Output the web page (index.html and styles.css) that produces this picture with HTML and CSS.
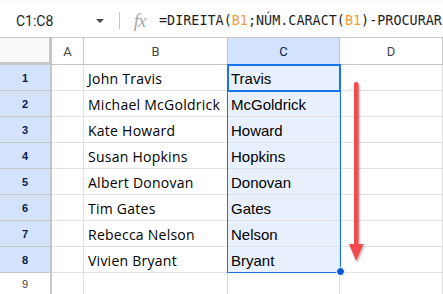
FILE: index.html
```html
<!DOCTYPE html>
<html>
<head>
	<meta charset="utf-8">
	<title>DIREITA</title>
	<link rel="stylesheet" href="styles.css">
</head>
<body>
	<div class="top-strip"></div>
	<div class="formula-bar">
		<div class="name-box">
			<span class="range">C1:C8</span>
			<span class="caret"></span>
		</div>
		<div class="divider"></div>
		<div class="fx">fx</div>
		<div class="formula">=DIREITA(<span class="ref">B1</span>;NÚM.CARACT(<span class="ref">B1</span>)-PROCURAR</div>
	</div>
	<div class="sheet">
		<div class="grid">
			<div class="corner"></div>
			<div class="col-head">A</div>
			<div class="col-head">B</div>
			<div class="col-head active">C</div>
			<div class="col-head">D</div>

			<div class="row-head active">1</div><div class="cell"></div><div class="cell name">John Travis</div><div class="cell last sel">Travis</div><div class="cell"></div>
			<div class="row-head active">2</div><div class="cell"></div><div class="cell name">Michael McGoldrick</div><div class="cell last sel">McGoldrick</div><div class="cell"></div>
			<div class="row-head active">3</div><div class="cell"></div><div class="cell name">Kate Howard</div><div class="cell last sel">Howard</div><div class="cell"></div>
			<div class="row-head active">4</div><div class="cell"></div><div class="cell name">Susan Hopkins</div><div class="cell last sel">Hopkins</div><div class="cell"></div>
			<div class="row-head active">5</div><div class="cell"></div><div class="cell name">Albert Donovan</div><div class="cell last sel">Donovan</div><div class="cell"></div>
			<div class="row-head active">6</div><div class="cell"></div><div class="cell name">Tim Gates</div><div class="cell last sel">Gates</div><div class="cell"></div>
			<div class="row-head active">7</div><div class="cell"></div><div class="cell name">Rebecca Nelson</div><div class="cell last sel">Nelson</div><div class="cell"></div>
			<div class="row-head active">8</div><div class="cell"></div><div class="cell name">Vivien Bryant</div><div class="cell last sel">Bryant</div><div class="cell"></div>
			<div class="row-head">9</div><div class="cell"></div><div class="cell name"></div><div class="cell"></div><div class="cell"></div>
		</div>

		<!-- selection C1:C8 -->
		<div class="range-box"></div>
		<div class="active-cell"></div>
		<div class="fill-handle"></div>

		<svg class="arrow" width="24" height="192" viewBox="0 0 24 192">
			<defs>
				<filter id="shadow" x="-50%" y="-10%" width="200%" height="120%">
					<feDropShadow dx="1" dy="1.5" stdDeviation="1.2" flood-color="#000" flood-opacity="0.35"/>
				</filter>
			</defs>
			<g filter="url(#shadow)" fill="#f04b4f">
				<rect x="8" y="4" width="4.5" height="166" rx="2.2"/>
				<polygon points="3,166 17.5,166 10.2,183"/>
			</g>
		</svg>
	</div>
</body>
</html>
```

FILE: styles.css
```css
*{margin: 0;padding: 0;box-sizing: border-box;}
body {
	width: 443px;
	height: 294px;
	overflow: hidden;
	background: #ffffff;
	font-family: Roboto, "Liberation Sans", Arial, sans-serif;
	color: #1f1f1f;
}
.top-strip {
	height: 4px;
	background: #f9fbfd;
}
.formula-bar {
	height: 34px;
	display: flex;
	align-items: center;
	border-bottom: 1px solid #c7c7c7;
	overflow: hidden;
}
.name-box {
	flex-shrink: 0;
	width: 119px;
	display: flex;
	align-items: center;
	padding-left: 16px;
	padding-right: 15px;
}
.range {
	font-size: 14px;
	flex: 1;
}
.caret {
	width: 0;
	height: 0;
	border-left: 4.5px solid transparent;
	border-right: 4.5px solid transparent;
	border-top: 4.5px solid #444746;
}
.divider {
	flex-shrink: 0;
	width: 1px;
	height: 17px;
	background: #c4c7c5;
}
.fx {
	flex-shrink: 0;
	width: 39px;
	text-align: center;
	font: italic 19px "Liberation Serif", serif;
	color: #a8a8a8;
	letter-spacing: -1px;
}
.formula {
	flex-shrink: 0;
	white-space: nowrap;
	font: 13.4px "DejaVu Sans Mono", "Liberation Mono", monospace;
	letter-spacing: 0.02px;
	color: #1f1f1f;
}
.ref {
	color: #f09a3e;
}

.sheet {
	position: relative;
}
.grid {
	display: grid;
	grid-template-columns: 52px 32px 144px 112px 103px;
	grid-template-rows: 27px repeat(8, 26px) 22px;
}
.grid > div {
	border-right: 1px solid #e1e1e1;
	border-bottom: 1px solid #e1e1e1;
	display: flex;
	align-items: center;
}
.grid > .corner {
	background: #f8f9fa;
	border-right: 3px solid #c4c7c5;
	border-bottom: 3px solid #c4c7c5;
}
.grid > .col-head {
	justify-content: center;
	font-size: 13px;
	color: #444746;
	border-bottom: 1px solid #c4c7c5;
	border-right-color: #c4c7c5;
	padding-top: 1px;
}
.grid > .col-head.active {
	background: #d3e3fd;
	color: #041e49;
}
.grid > .row-head {
	justify-content: center;
	font: 11px Arial, "Liberation Sans", sans-serif;
	color: #444746;
	border-right: 2px solid #c4c7c5;
	padding-top: 1px;
}
.grid > .row-head.active {
	background: #d3e3fd;
	color: #041e49;
	font-weight: bold;
	border-bottom-color: #c4c7c5;
}
.grid > .name {
	padding-left: 4px;
	padding-top: 2px;
	font: 14px "Open Sans", "Liberation Sans", sans-serif;
	letter-spacing: 0.25px;
	color: #000000;
	border-right-color: #cddcf0;
	white-space: nowrap;
}
.grid > .sel {
	background: #e8f0fe;
	padding-left: 3px;
	padding-top: 2px;
	font: 15px "Liberation Sans", Arial, sans-serif;
	color: #000000;
}

.range-box {
	position: absolute;
	left: 227px;
	top: 26px;
	width: 114px;
	height: 209px;
	border: 1px solid #1a73e8;
}
.active-cell {
	position: absolute;
	left: 227px;
	top: 26px;
	width: 114px;
	height: 28px;
	border: 2px solid #1a73e8;
}
.fill-handle {
	position: absolute;
	left: 336px;
	top: 229px;
	width: 9px;
	height: 9px;
	border-radius: 50%;
	background: #0b57d0;
	border: 1px solid #ffffff;
}
.arrow {
	position: absolute;
	left: 346px;
	top: 40px;
}
```
